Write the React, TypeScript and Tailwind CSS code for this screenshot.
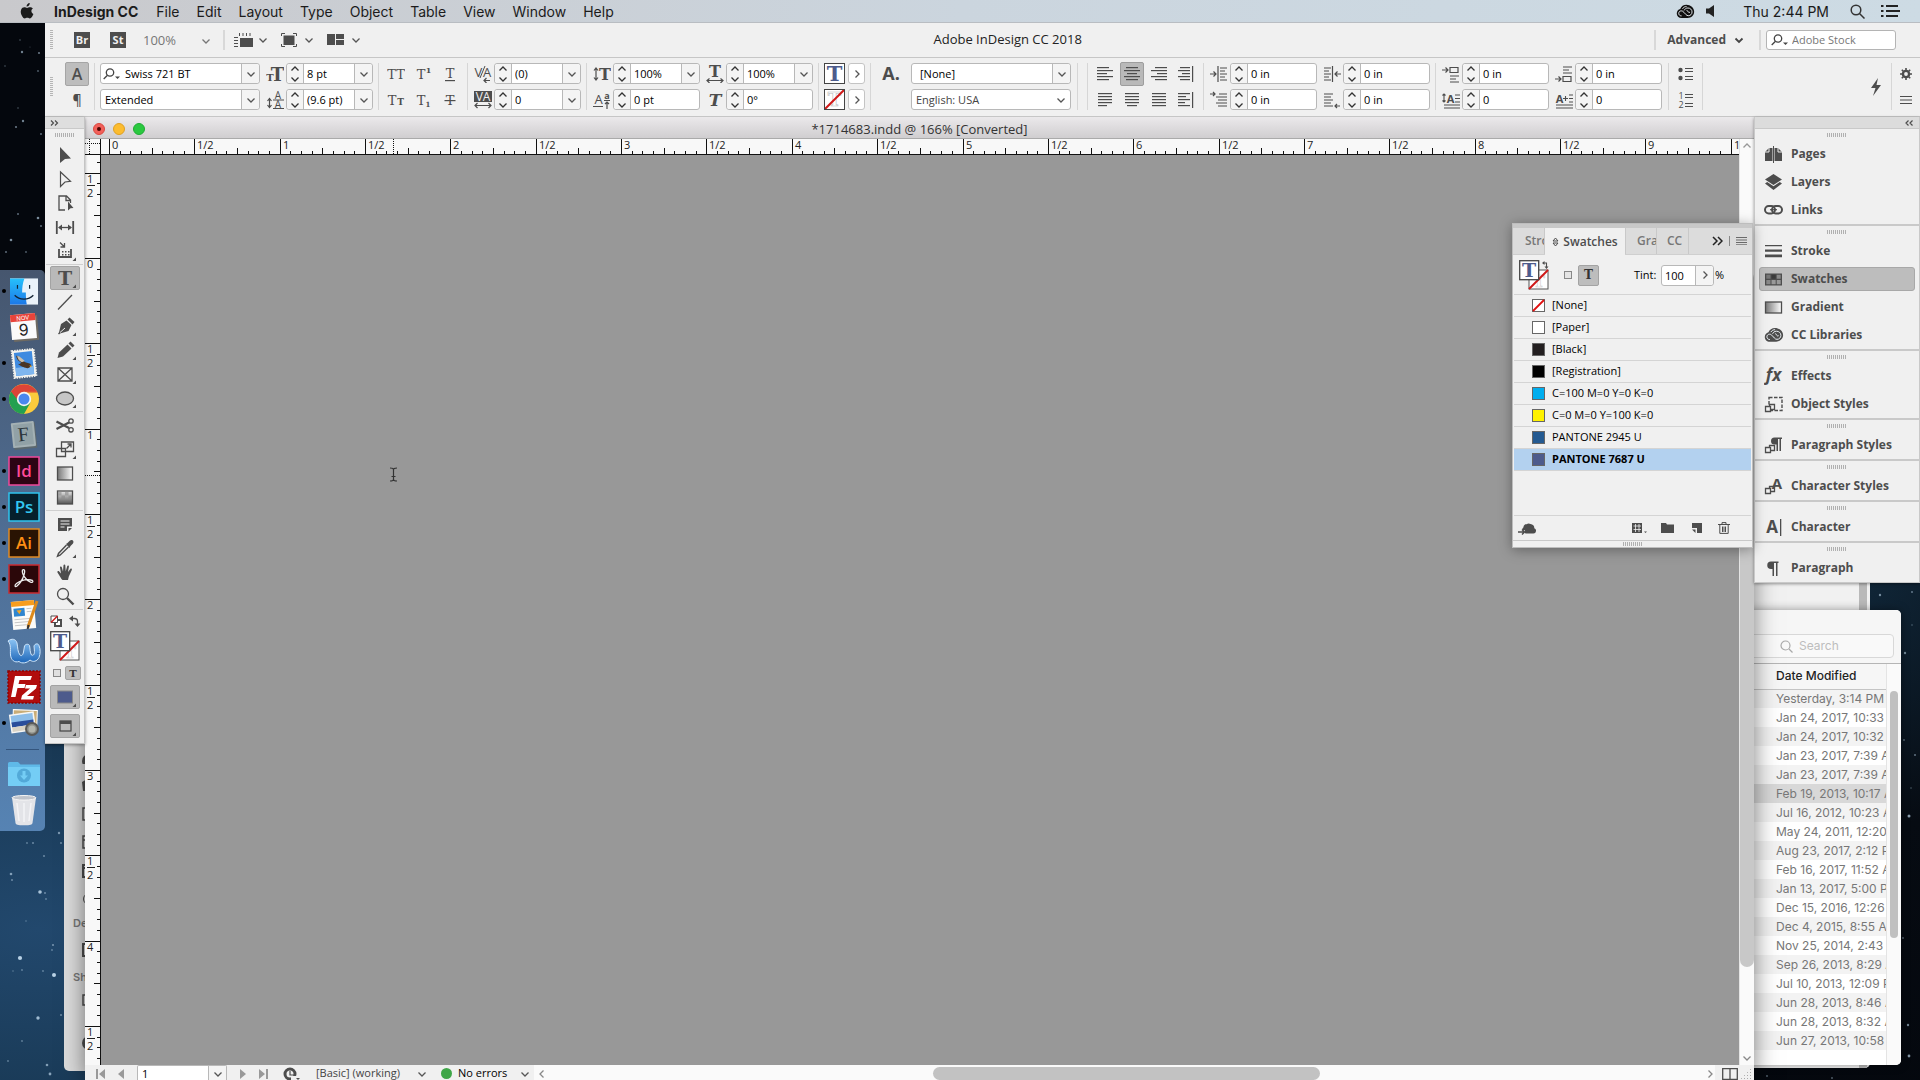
import React from "react";

const G = "#4d4d4d";

type Kids = { children?: React.ReactNode };

function Ico({ children, w = 18, h = 18 }: Kids & { w?: number; h?: number }) {
  return (
    <svg width={w} height={h} viewBox={`0 0 ${w} ${h}`} fill={G} stroke="none" className="block shrink-0" aria-hidden="true">
      {children}
    </svg>
  );
}

function S({ d, w = 1.5, c = G, dash }: { d: string; w?: number; c?: string; dash?: string }) {
  return <path d={d} fill="none" stroke={c} strokeWidth={w} strokeDasharray={dash} />;
}

function Slab({ x, y, s, children, bold = true, italic = false, fill = G }: { x: number; y: number; s: number; children: string; bold?: boolean; italic?: boolean; fill?: string }) {
  return (
    <text x={x} y={y} fontSize={s} fill={fill} textAnchor="middle" fontFamily="'DejaVu Serif', serif" fontWeight={bold ? 700 : 400} fontStyle={italic ? "italic" : "normal"}>
      {children}
    </text>
  );
}

function Sans({ x, y, s, children, bold = false, fill = G }: { x: number; y: number; s: number; children: string; bold?: boolean; fill?: string }) {
  return (
    <text x={x} y={y} fontSize={s} fill={fill} textAnchor="middle" fontFamily="'Open Sans', sans-serif" fontWeight={bold ? 700 : 400}>
      {children}
    </text>
  );
}

function Chevron({ dir = "down", c = "#555", w = 1.3 }: { dir?: "down" | "up" | "left" | "right"; c?: string; w?: number }) {
  const d = { down: "M1.5 3.5L5 7L8.5 3.5", up: "M1.5 6.5L5 3L8.5 6.5", left: "M6.5 1.5L3 5L6.5 8.5", right: "M3.5 1.5L7 5L3.5 8.5" }[dir];
  return (
    <svg width="10" height="10" viewBox="0 0 10 10" className="block shrink-0" aria-hidden="true">
      <path d={d} fill="none" stroke={c} strokeWidth={w} />
    </svg>
  );
}

/* ---------- menu bar ---------- */

const menus = ["File", "Edit", "Layout", "Type", "Object", "Table", "View", "Window", "Help"];

function CloudLogo({ s = 18, c = "#111" }: { s?: number; c?: string }) {
  return (
    <svg width={s} height={(s * 14) / 18} viewBox="0 0 18 14" fill="none" className="block shrink-0" aria-hidden="true">
      <path d="M5.2 13.2C2.6 13.2.7 11.3.7 8.9c0-2 1.4-3.7 3.3-4.2C4.9 2.3 7.200 .8 9.900 .8c3.900 0 7.300 2.800 7.300 6.500 0 3.400-2.800 5.900-6.200 5.900z" fill={c} />
      <path d="M5.300 11.300C3.600 11.300 2.600 10.200 2.600 8.900 2.600 7.500 3.600 6.500 5 6.500c1.100 0 1.700.5 2.500 1.400l1.800 2c.7.8 1.400 1.200 2.400 1.200 2 0 3.500-1.500 3.500-3.600S13.500 3.800 11.300 3.800 8.300 5 7.700 6.100M6.200 4.600C7 3 8.600 2.400 10 2.400M10 6.100c2 0 1.200 3 3.200 1.700" stroke="#e9eef2" strokeWidth=".9" />
    </svg>
  );
}

function MenuBar() {
  return (
    <header className="relative z-30 flex h-[23px] shrink-0 items-center border-b border-[#b9bdc2] bg-linear-to-r from-[#c9c9cc] via-[#cbd5de] to-[#cddbe4] pl-[20px] pr-[20px] font-['Inter',sans-serif] text-[14px] text-[#1b1b1b]">
      <svg width="14" height="16" viewBox="0 0 14 16" fill="#1b1b1b" className="shrink-0" aria-label="Apple">
        <path d="M9.700 0c.1 1-.3 1.900-.8 2.500-.6.700-1.400 1.200-2.300 1.100-.1-.9.3-1.800.8-2.400C8 .5 8.900.1 9.700 0zM12.900 5.500c-.9.600-1.500 1.400-1.500 2.600 0 1.400.8 2.400 2 2.900-.3.900-.7 1.700-1.200 2.500-.7 1-1.400 1.900-2.400 1.900s-1.300-.6-2.500-.6-1.600.6-2.500.6c-1 0-1.800-1-2.500-2C.9 11.500.2 8.700 1.200 6.500 1.800 5.100 3 4.200 4.300 4.200c1.100 0 1.900.7 2.800.7.800 0 1.500-.7 2.900-.7 1.100 0 2.200.5 2.900 1.300z" />
      </svg>
      <nav className="ml-[20px] flex items-center gap-[17px]">
        <button className="mr-px font-bold">InDesign CC</button>
        {menus.map((m) => (
          <button key={m}>{m}</button>
        ))}
      </nav>
      <div className="ml-auto flex items-center">
        <CloudLogo s={19} />
        <svg width="9" height="12" viewBox="0 0 9 12" fill="#222" className="ml-[11px]" aria-label="Volume">
          <path d="M0 3.500h3L8 0v12L3 8.500H0z" />
        </svg>
        <span className="ml-7 mr-[21px]">Thu 2:44 PM</span>
        <svg width="15" height="15" viewBox="0 0 15 15" fill="none" stroke="#333" strokeWidth="1.500" aria-label="Search">
          <circle cx="6" cy="6" r="4.800" />
          <path d="M9.500 9.500L14.500 14.500" />
        </svg>
        <svg width="19" height="12" viewBox="0 0 19 12" fill="#222" className="ml-[16px]" aria-label="Notifications">
          <path d="M0 0h2.500v2H0zM5 0h12v2H5zM0 5h2.500v2H0zM5 5h14v2H5zM0 10h2.500v2H0zM5 10h12v2H5z" />
        </svg>
      </div>
    </header>
  );
}

/* ---------- application bar ---------- */

function GripV() {
  return <div className="h-[20px] w-[3px] shrink-0 bg-[repeating-linear-gradient(to_bottom,#b5b5b5_0_1px,transparent_1px_2px)]" />;
}

function GripH() {
  return <div className="h-[4px] w-[20px] shrink-0 bg-[repeating-linear-gradient(to_right,#b0b0b0_0_1px,transparent_1px_2px)]" />;
}

function Loupe({ c = "#444" }: { c?: string }) {
  return (
    <svg width="18" height="12" viewBox="0 0 18 12" fill="none" stroke={c} strokeWidth="1.300" className="shrink-0" aria-hidden="true">
      <circle cx="7" cy="4.500" r="3.700" />
      <path d="M4.500 7.200L.7 11" />
      <path d="M12 8.500h5l-2.500 2.500z" fill={c} stroke="none" />
    </svg>
  );
}

function AppBar() {
  return (
    <div className="flex h-[35px] shrink-0 items-center border-b border-[#c6c6c6] bg-[#f0f0f0] pl-[5px]">
      <GripV />
      <button className="ml-[21px] h-4 w-4 bg-[#4d4d4d] text-center text-[11px] leading-4 font-bold text-[#f0f0f0]">Br</button>
      <button className="ml-5 h-4 w-4 bg-[#4d4d4d] text-center text-[11px] leading-4 font-bold text-[#f0f0f0]">St</button>
      <label className="ml-[17px] flex items-center pt-[2px]">
        <input aria-label="Zoom level" defaultValue="100%" className="w-[58px] bg-transparent text-[13px] text-[#777] outline-none" />
        <Chevron c="#777" />
      </label>
      <div className="ml-[12px] h-5 w-[2px] bg-[#d8d8d8]" />
      <button aria-label="View options" className="ml-[9px] flex items-center gap-[5px]">
        <Ico w={19} h={16}>
          <path d="M6 6h13v9H6z" />
          <S d="M5 2.500H19" w={3} dash="1 2.500" />
          <S d="M2 5V15" w={4} dash="1 2" />
        </Ico>
        <Chevron />
      </button>
      <button aria-label="Screen mode" className="ml-[13px] flex items-center gap-[7px]">
        <Ico w={16} h={16}>
          <path d="M2.500 3.500h11v9.500h-11z" />
          <S d="M.5 4V1.500H4M12 1.500h3.500V4M.5 12v2.500H4M12 14.500h3.500V12" w={1} />
        </Ico>
        <Chevron />
      </button>
      <button aria-label="Arrange documents" className="ml-[13px] flex items-center gap-[7px]">
        <Ico w={17} h={16}>
          <path d="M0 2h8v11H0zM9 2h8v5H9zM9 8h8v5H9z" />
        </Ico>
        <Chevron />
      </button>
      <h1 className="flex-1 text-center text-[13px] text-[#222]">Adobe InDesign CC 2018</h1>
      <div className="h-5 w-[2px] bg-[#d8d8d8]" />
      <button className="ml-[11px] flex items-center gap-2 text-[12px] font-bold text-[#4d4d4d]">
        Advanced
        <Chevron w={1.800} c="#444" />
      </button>
      <div className="ml-[15px] h-5 w-[2px] bg-[#d8d8d8]" />
      <label className="mr-6 ml-[5px] flex h-[20px] w-[130px] items-center rounded-[3px] border border-[#b4b4b4] bg-white pl-1">
        <Loupe />
        <input type="search" aria-label="Adobe Stock" placeholder="Adobe Stock" className="ml-[3px] w-full min-w-0 text-[11px] text-[#555] outline-none placeholder:text-[#777]" />
      </label>
    </div>
  );
}

/* ---------- control bar ---------- */

function Group({ children, className = "" }: Kids & { className?: string }) {
  return <div className={`flex h-[47px] shrink-0 border-l border-[#d6d6d6] ${className}`}>{children}</div>;
}

function Rows({ children, className = "" }: Kids & { className?: string }) {
  return <div className={`flex flex-col gap-[5px] ${className}`}>{children}</div>;
}

function Cell({ children, className = "w-[22px]" }: Kids & { className?: string }) {
  return <div className={`flex h-[21px] shrink-0 items-center justify-center ${className}`}>{children}</div>;
}

function Stepper({ label, value, arrow = false }: { label: string; value: string; arrow?: boolean }) {
  return (
    <div className="flex h-[21px] w-[87px] rounded-[3px] border border-[#b8b8b8] bg-white">
      <button aria-label={`Step ${label}`} className="flex w-4 shrink-0 flex-col items-center justify-between rounded-l-[3px] bg-[#f4f4f4]">
        <Chevron dir="up" c="#333" />
        <Chevron c="#333" />
      </button>
      <input aria-label={label} defaultValue={value} className="w-full min-w-0 border-l border-[#b8b8b8] pl-[3px] text-[11px] leading-[19px] text-black outline-none" />
      {arrow && (
        <button aria-label={`${label} presets`} className="flex w-[18px] shrink-0 items-center justify-center rounded-r-[3px] border-l border-[#b8b8b8] bg-[#f4f4f4]">
          <Chevron />
        </button>
      )}
    </div>
  );
}

function Combo({ label, value, search = false, pad = "pl-1" }: { label: string; value: string; search?: boolean; pad?: string }) {
  return (
    <div className="flex h-[21px] w-[160px] items-center rounded-[3px] border border-[#b8b8b8] bg-white">
      {search && (
        <span className="pl-[2px]">
          <Loupe />
        </span>
      )}
      <input aria-label={label} defaultValue={value} className={`w-full min-w-0 text-[11px] leading-[19px] text-black outline-none ${pad}`} />
      <button aria-label={`${label} list`} className="flex h-full w-[18px] shrink-0 items-center justify-center rounded-r-[3px] border-l border-[#b8b8b8] bg-[#f4f4f4]">
        <Chevron />
      </button>
    </div>
  );
}

function Align({ rows, bar = false }: { rows: number[][]; bar?: boolean }) {
  return (
    <Ico w={18} h={18}>
      {rows.map(([a, b], i) => (
        <path key={i} d={`M${a} ${2 + i * 3}H${b}v1.200H${a}z`} />
      ))}
      {bar && <path d="M15 1h1.200v16H15z" />}
    </Ico>
  );
}

const alignsTop = [
  { n: "Align left", r: [[1, 13], [1, 17], [1, 11], [1, 17], [1, 13]] },
  { n: "Align center", r: [[3, 15], [1, 17], [4, 14], [1, 17], [3, 15]], on: true },
  { n: "Align right", r: [[5, 17], [1, 17], [7, 17], [1, 17], [5, 17]] },
  { n: "Align towards spine", r: [[3, 13], [1, 13], [5, 13], [1, 13], [3, 13]], bar: true },
];
const alignsBottom = [
  { n: "Justify last left", r: [[2, 16], [2, 16], [2, 16], [2, 16], [2, 11]] },
  { n: "Justify last center", r: [[2, 16], [2, 16], [2, 16], [2, 16], [4, 14]] },
  { n: "Justify all", r: [[2, 16], [2, 16], [2, 16], [2, 16], [2, 16]] },
  { n: "Align away from spine", r: [[1, 13], [1, 9], [1, 13], [1, 8], [1, 13]], bar: true },
];

function AlignRow({ items }: { items: { n: string; r: number[][]; on?: boolean; bar?: boolean }[] }) {
  return (
    <div className="flex">
      {items.map((a) => (
        <Cell key={a.n} className="w-[27px]">
          <button aria-label={a.n} className={a.on ? "flex h-6 w-6 shrink-0 items-center justify-center rounded-[2px] border border-[#9d9d9d] bg-[#b9b9b9]" : "flex h-6 w-6 shrink-0 items-center justify-center"}>
            <Align rows={a.r} bar={a.bar} />
          </button>
        </Cell>
      ))}
    </div>
  );
}

function ControlBar() {
  return (
    <div className="flex h-[59px] shrink-0 items-center border-b border-[#c6c6c6] bg-[#f0f0f0] pb-[1px] pl-[5px]">
      <GripV />
      <Rows className="ml-[11px] w-[30px]">
        <Cell className="w-[26px]">
          <button aria-label="Character formatting" className="flex h-6 w-6 shrink-0 items-center justify-center rounded-[2px] border border-[#a5a5a5] bg-[#bdbdbd] text-[16px] font-semibold text-[#4d4d4d]">A</button>
        </Cell>
        <Cell className="w-[26px]">
          <button aria-label="Paragraph formatting" className="text-[14px] font-semibold text-[#4d4d4d]">¶</button>
        </Cell>
      </Rows>
      <Group className="pr-[5px] pl-[5px]">
        <Rows>
          <Combo label="Font" value="Swiss 721 BT" search />
          <Combo label="Font style" value="Extended" />
        </Rows>
        <Rows className="ml-1">
          <Cell>
            <Ico>
              <Slab x={4} y={16} s={10}>T</Slab>
              <Slab x={11.500} y={16} s={18}>T</Slab>
            </Ico>
          </Cell>
          <Cell>
            <Ico>
              <S d="M3.500 8v8M1.500 10L3.500 7.500L5.500 10M1.500 14L3.500 16.500L5.500 14" w={1.200} />
              <Sans x={12} y={8} s={10}>A</Sans>
              <Sans x={12} y={17} s={10}>A</Sans>
              <path d="M7 8.600h11v1H7zM7 17h11v1H7z" />
            </Ico>
          </Cell>
        </Rows>
        <Rows>
          <Stepper label="Font size" value="8 pt" arrow />
          <Stepper label="Leading" value="(9.6 pt)" arrow />
        </Rows>
      </Group>
      <Group className="pr-[4px] pl-[3px]">
        <Rows>
          <div className="flex">
            <Cell className="w-[27px]"><button aria-label="All caps"><Ico><Slab x={4.500} y={14} s={13} bold={false}>T</Slab><Slab x={13.500} y={14} s={13} bold={false}>T</Slab></Ico></button></Cell>
            <Cell className="w-[27px]"><button aria-label="Superscript"><Ico><Slab x={7} y={14} s={13} bold={false}>T</Slab><Slab x={14.500} y={8} s={8}>1</Slab></Ico></button></Cell>
            <Cell className="w-[27px]"><button aria-label="Underline"><Ico><Slab x={9} y={13} s={13} bold={false}>T</Slab><path d="M4 15h10v1.200H4z" /></Ico></button></Cell>
          </div>
          <div className="flex">
            <Cell className="w-[27px]"><button aria-label="Small caps"><Ico><Slab x={5} y={14} s={13} bold={false}>T</Slab><Slab x={13.500} y={14} s={9}>T</Slab></Ico></button></Cell>
            <Cell className="w-[27px]"><button aria-label="Subscript"><Ico><Slab x={7} y={14} s={13} bold={false}>T</Slab><Slab x={14} y={16} s={7}>1</Slab></Ico></button></Cell>
            <Cell className="w-[27px]"><button aria-label="Strikethrough"><Ico><Slab x={9} y={14} s={13} bold={false}>T</Slab><path d="M3.500 9h11v1.200h-11z" /></Ico></button></Cell>
          </div>
        </Rows>
      </Group>
      <Group className="pr-[5px] pl-[4px]">
        <Rows>
          <Cell><Ico><Sans x={4.500} y={12} s={13}>V</Sans><Sans x={13} y={12} s={13}>A</Sans><S d="M6 13L11 1" w={1} /><S d="M10 15.500h6M12.500 13L10 15.500L12.500 18" w={1.200} /></Ico></Cell>
          <Cell><Ico><path d="M0 0h18v11H0z" /><Sans x={9} y={10} s={12} fill="#f0f0f0">VA</Sans><S d="M1 14.500h16M3.500 12L1 14.500L3.500 17M14.500 12L17 14.500L14.500 17" w={1.200} /></Ico></Cell>
        </Rows>
        <Rows>
          <Stepper label="Kerning" value="(0)" arrow />
          <Stepper label="Tracking" value="0" arrow />
        </Rows>
      </Group>
      <Group className="pr-[5px] pl-[4px]">
        <Rows>
          <Cell><Ico><S d="M3 3v12M1 5.500L3 3L5 5.500M1 12.500L3 15L5 12.500" w={1.200} /><Slab x={12} y={15} s={16}>T</Slab></Ico></Cell>
          <Cell><Ico><Sans x={5.500} y={13} s={13}>A</Sans><Sans x={14} y={8} s={9} bold>a</Sans><S d="M0 15.500h10M11 9.500h6M14 18v-7M12 13L14 11L16 13" w={1.200} /></Ico></Cell>
        </Rows>
        <Rows>
          <Stepper label="Vertical scale" value="100%" arrow />
          <Stepper label="Baseline shift" value="0 pt" />
        </Rows>
        <Rows className="ml-1">
          <Cell><Ico><Slab x={9} y={12} s={16}>T</Slab><S d="M1 15.500h16M3.500 13.500L1 15.500L3.500 18M14.500 13.500L17 15.500L14.500 18" w={1.200} /></Ico></Cell>
          <Cell><Ico><Slab x={9} y={15} s={17} italic>T</Slab></Ico></Cell>
        </Rows>
        <Rows>
          <Stepper label="Horizontal scale" value="100%" arrow />
          <Stepper label="Skew" value="0°" />
        </Rows>
      </Group>
      <Group className="gap-[3px] px-[5px]">
        <Rows>
          <button aria-label="Fill" className="h-[21px] w-[21px] border border-[#444] bg-white"><Ico w={19} h={19}><Slab x={9.500} y={17} s={21} fill="#4d5b8c">T</Slab></Ico></button>
          <button aria-label="Stroke" className="h-[21px] w-[21px] border border-[#444] bg-white"><Ico w={19} h={19}><text x="9.500" y="16" fontSize="18" textAnchor="middle" fontFamily="'DejaVu Serif', serif" fontWeight="700" fill="#fff" stroke="#bbb" strokeWidth=".6">T</text><S d="M0 19L19 0" w={2} c="#d01818" /></Ico></button>
        </Rows>
        <Rows>
          <button aria-label="Fill options" className="flex h-[21px] w-[17px] items-center justify-center rounded-[3px] border border-[#c4c4c4] bg-white"><Chevron dir="right" /></button>
          <button aria-label="Stroke options" className="flex h-[21px] w-[17px] items-center justify-center rounded-[3px] border border-[#c4c4c4] bg-white"><Chevron dir="right" /></button>
        </Rows>
      </Group>
      <Group className="pr-[6px]">
        <Cell className="w-10"><span className="text-[18px] font-bold text-[#4d4d4d]">A.</span></Cell>
        <Rows>
          <Combo label="Character style" value="[None]" pad="pl-2" />
          <div className="grid h-[21px] w-[160px] items-center rounded-[3px] border border-[#b8b8b8] bg-white">
            <select aria-label="Language" className="col-start-1 row-start-1 w-full appearance-none pl-1 text-[11px] leading-[19px] text-[#444] outline-none">
              <option>English: USA</option>
            </select>
            <span className="pointer-events-none col-start-1 row-start-1 mr-1 justify-self-end"><Chevron /></span>
          </div>
        </Rows>
      </Group>
      <Group className="w-[10px]" />
      <Group className="pr-[4px] pl-[3px]">
        <Rows>
          <AlignRow items={alignsTop} />
          <AlignRow items={alignsBottom} />
        </Rows>
      </Group>
      <Group className="pr-[5px] pl-[4px]">
        <Rows>
          <Cell><Ico><S d="M0 9h6M3.500 6.500L6 9L3.500 11.500M8 1v16M10 3h7M10 6h5M10 9h7M10 12h5M10 15h7" w={1.200} /></Ico></Cell>
          <Cell><Ico><S d="M0 3h5M3 1L5 3L3 5M9 3h8M6 6h11M8 9h9M6 12h11M8 15h9" w={1.200} /></Ico></Cell>
        </Rows>
        <Rows>
          <Stepper label="Left indent" value="0 in" />
          <Stepper label="First line left indent" value="0 in" />
        </Rows>
        <Rows className="ml-1">
          <Cell><Ico><S d="M18 9h-6M14.500 6.500L12 9L14.500 11.500M9.500 1v16M1 3h7M1 6h5M1 9h7M1 12h5M1 15h7" w={1.200} /></Ico></Cell>
          <Cell><Ico><S d="M1 3h9M1 6h7M1 9h9M1 12h7M1 15h9M17 15h-5M14 13L12 15L14 17" w={1.200} /></Ico></Cell>
        </Rows>
        <Rows>
          <Stepper label="Right indent" value="0 in" />
          <Stepper label="Last line right indent" value="0 in" />
        </Rows>
      </Group>
      <Group className="pr-[6px] pl-[4px]">
        <Rows>
          <Cell><Ico><S d="M0 5h6M3.500 2.500L6 5L3.500 7.500M8 2.500h8v5H8zM8 11h9M8 14h6M8 17h9" w={1.200} /></Ico></Cell>
          <Cell><Ico><S d="M2 3v8M.5 4.500L2 3L3.500 4.500M.5 9.500L2 11L3.500 9.500M13 4h5M13 7.500h5M13 11h5M2 14h16M2 17h16" w={1.100} /><Sans x={8.500} y={11.500} s={11} bold>A</Sans></Ico></Cell>
        </Rows>
        <Rows>
          <Stepper label="Space before" value="0 in" />
          <Stepper label="Drop cap lines" value="0" />
        </Rows>
        <Rows className="ml-1">
          <Cell><Ico><S d="M8 2h9M8 5h6M8 8h9M0 14h6M3.500 11.500L6 14L3.500 16.500M8 11.500h8v5H8z" w={1.200} /></Ico></Cell>
          <Cell><Ico><S d="M8 7.500h5M10.500 5v5M14 4h4M14 7.500h4M14 11h4M1 14h17M1 17h17" w={1.100} /><Sans x={4.500} y={11.500} s={11} bold>A</Sans></Ico></Cell>
        </Rows>
        <Rows>
          <Stepper label="Space after" value="0 in" />
          <Stepper label="Drop cap characters" value="0" />
        </Rows>
      </Group>
      <Group className="w-[34px] justify-center">
        <Rows>
          <Cell><button aria-label="Bulleted list"><Ico><circle cx="3.500" cy="5" r="2.200" /><circle cx="3.500" cy="13" r="2.200" /><S d="M8 3.500h8M8 6.500h8M8 11.500h8M8 14.500h8" w={1.200} /></Ico></button></Cell>
          <Cell><button aria-label="Numbered list"><Ico><Sans x={4} y={8} s={9}>1</Sans><Sans x={4} y={17} s={9}>2</Sans><S d="M8 3.500h8M8 6.500h8M8 12.500h8M8 15.500h8" w={1.200} /></Ico></button></Cell>
        </Rows>
      </Group>
      <Group className="flex-1 items-center justify-end pr-[9px]">
        <button aria-label="Quick apply"><Ico w={12} h={18}><path d="M8 0L1 10h4.500L3 18L11 7H6.500z" /></Ico></button>
      </Group>
      <Group className="w-[29px] justify-center">
        <Rows>
          <Cell>
            <button aria-label="Customize control panel">
              <Ico w={12} h={12}><circle cx="6" cy="6" r="3.200" fill="none" stroke={G} strokeWidth="2.200" /><S d="M6 0v12M0 6h12M1.800 1.800l8.400 8.400M10.200 1.800l-8.400 8.400" w={1.600} /><circle cx="6" cy="6" r="1.900" fill="#f0f0f0" /></Ico>
            </button>
          </Cell>
          <Cell>
            <button aria-label="Control panel menu"><Ico w={12} h={10}><S d="M0 1.500h12M0 5h12M0 8.500h12" w={1.200} /></Ico></button>
          </Cell>
        </Rows>
      </Group>
    </div>
  );
}

/* ---------- Mac dock ---------- */

function Tile({ bg, edge, fg, t }: { bg: string; edge: string; fg: string; t: string }) {
  return (
    <svg width="32" height="30" viewBox="0 0 32 30" aria-label={t}>
      <rect x="1" y="1" width="30" height="28" fill={bg} stroke={edge} strokeWidth="1.500" />
      <text x="16" y="20.500" fontSize="17" textAnchor="middle" fill={fg} fontFamily="'Open Sans', sans-serif" fontWeight="600">{t}</text>
    </svg>
  );
}

const dockItems: { n: string; run?: boolean; el: React.ReactNode }[] = [
  { n: "Finder", run: true, el: (
    <svg width="28" height="27" viewBox="0 0 30 28"><defs><linearGradient id="fa" x1="0" x2="0" y1="0" y2="1"><stop offset="0" stopColor="#26c0fb" /><stop offset="1" stopColor="#1c78e8" /></linearGradient></defs><rect width="30" height="28" fill="#e9f2fa" /><path d="M0 0h15.500c-2 5-2.500 10-2.500 15h4c0 5 .2 9 1 13H0z" fill="url(#fa)" /><path d="M8 7v4M21 7v4" stroke="#123" strokeWidth="1.300" /><path d="M5 18c5 5.500 15 5.500 20 0" stroke="#123" strokeWidth="1.300" fill="none" /></svg>) },
  { n: "Calendar", el: (
    <svg width="30" height="30" viewBox="0 0 30 30"><g transform="rotate(-5 15 15)"><rect x="4" y="4" width="25" height="25" fill="#6e6a62" /><rect x="2" y="2" width="25" height="25" fill="#fafafa" /><rect x="2" y="2" width="25" height="7" fill="#e8443a" /><text x="14.500" y="8" fontSize="6" fill="#fff" textAnchor="middle" fontFamily="Inter, sans-serif">NOV</text><text x="14.500" y="23.500" fontSize="16" fill="#222" textAnchor="middle" fontFamily="Inter, sans-serif">9</text></g></svg>) },
  { n: "Mail", run: true, el: (
    <svg width="28" height="32" viewBox="0 0 28 32"><g transform="rotate(-6 14 16)"><rect x="3" y="3" width="22" height="27" fill="#f2f2ee" /><rect x="3" y="3" width="22" height="27" fill="none" stroke="#f2f2ee" strokeWidth="2" strokeDasharray="1.500 1" /><rect x="5" y="5" width="18" height="23" fill="#3f8be0" /><path d="M5 20h18v8H5z" fill="#7fb6ee" /><path d="M7 8c3 0 5 5 8 7s5 1 6 4c-2 3-4 3-6 2-3-2-5-2-7-5 2 1 3 0 3-1C8 13 7 11 7 8z" fill="#4a3524" /><path d="M8 8c3 1 5 4 7 6l-3 1C9 13 8 11 8 8z" fill="#c9bfae" /><path d="M19 19l3 .5-2 1.500z" fill="#e6a52e" /></g></svg>) },
  { n: "Chrome", run: true, el: (
    <svg width="32" height="32" viewBox="0 0 32 32"><circle cx="16" cy="16" r="15" fill="#fbcb3c" /><path d="M16 16L3 8.500A15 15 0 0 0 16 31l6.500-11.500z" fill="#24a050" /><path d="M16 16H9L3 8.500A15 15 0 0 1 29 8.800H16z" fill="#dc4437" /><path d="M16 9H29.200" stroke="#dc4437" strokeWidth="1" /><circle cx="16" cy="16" r="7.200" fill="#f4f4f4" /><circle cx="16" cy="16" r="5.500" fill="#4a87ee" /></svg>) },
  { n: "Font Book", el: (
    <svg width="28" height="32" viewBox="0 0 28 32"><g transform="rotate(-6 14 16)"><rect x="3" y="4" width="23" height="26" rx="1" fill="#5c686e" /><rect x="2" y="3" width="23" height="25" rx="1" fill="#a4b1b4" /><rect x="4" y="5" width="19" height="21" fill="#91a1a6" /><text x="13.500" y="22" fontSize="20" fill="#2b343a" textAnchor="middle" fontFamily="'Liberation Serif', serif">F</text></g></svg>) },
  { n: "InDesign", run: true, el: <Tile bg="#2d0414" edge="#f0489a" fg="#ff4a98" t="Id" /> },
  { n: "Photoshop", run: true, el: <Tile bg="#06202c" edge="#2fc3ee" fg="#33c8f2" t="Ps" /> },
  { n: "Illustrator", run: true, el: <Tile bg="#291303" edge="#e08a24" fg="#ff8f14" t="Ai" /> },
  { n: "Acrobat", run: true, el: (
    <svg width="32" height="30" viewBox="0 0 32 30"><rect x="1" y="1" width="30" height="28" fill="#2b0709" stroke="#c92b30" strokeWidth="1.500" /><path d="M14.500 6c2-1.500 3 1 1.500 5-1.500 4.500-4.500 9-7 11-2 1.500-3-.5-.5-2.500C12 17 18 15 23 16c3 .5 2 3-.5 2.200C18 16.500 13.500 10 14.500 6z" fill="none" stroke="#eee" strokeWidth="1.300" /></svg>) },
  { n: "Pages", el: (
    <svg width="30" height="32" viewBox="0 0 30 32"><g transform="rotate(-5 14 16)"><rect x="3" y="2" width="23" height="28" fill="#fbfbf8" /><rect x="3" y="2" width="23" height="5" fill="#f79d1e" /><rect x="5" y="9" width="11" height="8" fill="#2f86cf" /><path d="M8 11h5l-2.500 4z" fill="#f5a623" /><path d="M18 10h5M18 13h5M5 20h17M5 23h17M5 26h12" stroke="#bbb" strokeWidth=".8" /></g><path d="M28 2L19 28" stroke="#dc8a1c" strokeWidth="3" /><path d="M19.600 26l-1 4" stroke="#333" strokeWidth="2" /></svg>) },
  { n: "Word", el: (
    <svg width="34" height="26" viewBox="0 0 34 26"><defs><linearGradient id="wd" x1="0" x2="0" y1="0" y2="1"><stop stopColor="#8cc4f4" /><stop offset="1" stopColor="#1d66b8" /></linearGradient></defs><path d="M1 3c4-3 8-2 9 2 .8 4 .5 9 3 12 1.500 1.500 3 0 3.500-3L17.500 8c.8-2 4-2.500 5-.5.8 3 .2 7 2 9.500 2 1 3-1 3-3.500l-.5-5.500C28 5.500 31 5 32 7.500c1.500 4 1.500 8 0 12-2 4-6 5-9 2.500-3 3-8 4-11 1.500C7.500 25 4 22 3.500 17 3 12 4.500 7 1 3z" fill="url(#wd)" stroke="#cfe6fb" strokeWidth="1" /></svg>) },
  { n: "FileZilla", el: (
    <svg width="34" height="34" viewBox="0 0 34 34"><rect x="1" y="1" width="32" height="32" fill="#b10d0d" stroke="#8b0505" strokeWidth="1.500" strokeDasharray="2 1.500" /><path d="M8 6h17l-1.500 4H12.500L11.500 14h7l-1 4h-7L8.500 27H4zM19 15h11l-1 3.500L20 26h7l-1 3.500H14l1-4L23 18.500h-5z" fill="#fff" /></svg>) },
  { n: "Preview", run: true, el: (
    <svg width="32" height="30" viewBox="0 0 32 30"><rect x="5" y="2" width="24" height="18" fill="#c9ad77" stroke="#fff" transform="rotate(2 16 12)" /><g transform="rotate(-8 14 14)"><rect x="2" y="5" width="25" height="19" fill="#f7f7f5" /><rect x="3.500" y="6.500" width="22" height="8" fill="#8cbde8" /><rect x="3.500" y="13" width="22" height="5" fill="#2a4d9a" /><rect x="3.500" y="18" width="22" height="4.500" fill="#d9d3c5" /></g><circle cx="24" cy="21" r="6" fill="#8d8f8a" stroke="#5a5a58" strokeWidth="2" /><circle cx="24" cy="21" r="3.500" fill="#b4b6ae" /></svg>) },
];

function MacDock() {
  return (
    <aside aria-label="Dock" className="flex w-[45px] shrink-0 flex-col justify-center pb-px">
      <div className="flex flex-col rounded-r-[5px] bg-linear-to-b from-[#46566e] via-[#4f6f96] to-[#5683b3] pt-[3px] pb-[3px]">
        {dockItems.map((d) => (
          <button key={d.n} aria-label={d.n} className="flex h-9 items-center pr-1">
            <span className={d.run ? "ml-[2px] h-1 w-1 shrink-0 rounded-full bg-black" : "ml-[2px] h-1 w-1 shrink-0"} />
            <span className="flex flex-1 justify-center">{d.el}</span>
          </button>
        ))}
        <div className="mx-[6px] mt-[8px] mb-[6px] h-px bg-[#34557d]" />
        <button aria-label="Downloads" className="flex h-9 items-center justify-center pl-[3px]">
          <svg width="32" height="26" viewBox="0 0 32 26"><path d="M0 2.500A1.500 1.500 0 0 1 1.500 1H10l2.500 2.500H32V25H0z" fill="#5fb9e8" /><path d="M0 6h32v19H0z" fill="#74cdf5" /><circle cx="16" cy="14.500" r="7" fill="#52a9d8" /><path d="M14.500 10h3v4.500h2.500L16 19l-4-4.500h2.500z" fill="#74cdf5" /></svg>
        </button>
        <button aria-label="Trash" className="flex h-9 items-center justify-center pl-[3px]">
          <svg width="26" height="31" viewBox="0 0 26 31"><path d="M1 2.500L4.500 28c.3 1.500 2 2.300 8.500 2.300s8.200-.8 8.500-2.300L25 2.500z" fill="#e3e4e8" /><ellipse cx="13" cy="2.800" rx="12" ry="2.300" fill="#bfc4cc" stroke="#f5f5f5" /><path d="M6 8l2 18M13 8v19M20 8l-2 18" stroke="#f3f3f6" strokeWidth="1.500" /></svg>
        </button>
      </div>
    </aside>
  );
}

/* ---------- tool strip ---------- */

const corner = <path d="M21 20h-3.500L21 16.500z" />;

const tools: { n: string; el: React.ReactNode; sep?: boolean; on?: boolean }[] = [
  { n: "Selection", el: <path d="M5 2v16l5-4 6-.5z" /> },
  { n: "Direct Selection", el: <S d="M5.500 3v14.500l4.500-4.500 5.500-.7z" w={1.200} /> },
  { n: "Page", el: <><S d="M10 17H4V3h7.500l4 4v3M11 3v4.500h4.500" w={1.300} /><path d="M13 8.500v9l2.500-2.200 3-.3z" /></> },
  { n: "Gap", el: <><S d="M1.800 4v13M18.200 4v13" w={1.800} /><S d="M4 10.500h12" w={1.300} /><path d="M3 10.500l4-3v6zM17 10.500l-4-3v6z" /></> },
  { n: "Content Collector", sep: true, el: <><S d="M4 8v8h12V8" w={1.800} /><path d="M7 10h1.500v1.500H7zM10 10h1.500v1.500H10zM13 10h1.500v1.500H13zM7 13h1.500v1.500H7zM10 13h1.500v1.500H10zM13 13h1.500v1.500H13z" /><S d="M5 1.500l4 4M9.500 2v4H5.500" w={1.300} />{corner}</> },
  { n: "Type", on: true, el: <><Slab x={10} y={16.500} s={19}>T</Slab>{corner}</> },
  { n: "Line", el: <S d="M3 17.500L17 3" w={1.300} /> },
  { n: "Pen", el: <><path d="M11.500 4.500l5 4.500-3 6-8.500 2.500-1 1-1-1 1-1L6 8z" /><path d="M12.500 3.500l2-2 5 4.500-2 2.500z" /><S d="M5 16.500l5-4.500" w={1} c="#f0f0f0" />{corner}</> },
  { n: "Pencil", el: <><path d="M2.500 18l1.500-5.500 8.500-8 4 4-8.500 8z" /><path d="M13.500 3.500l2-2 4 4-2 2z" />{corner}</> },
  { n: "Rectangle Frame", el: <><S d="M3 4h14v13H3zM3 4l14 13M17 4L3 17" w={1.300} />{corner}</> },
  { n: "Ellipse", sep: true, el: <><ellipse cx="10" cy="10.500" rx="8.500" ry="6.500" fill="#c6c6c6" stroke={G} strokeWidth="1.300" />{corner}</> },
  { n: "Scissors", el: <><S d="M1.500 6.500L14 13M1.500 14L14 7.500" w={2.200} /><circle cx="16" cy="6" r="2.200" fill="none" stroke={G} strokeWidth="1.300" /><circle cx="16" cy="14.800" r="2.200" fill="none" stroke={G} strokeWidth="1.300" /></> },
  { n: "Free Transform", el: <><S d="M6.500 3h12v9.500h-12zM1.500 9.500h9v8h-9z" w={1.300} /><S d="M11.500 9.500l4-4M12.500 5h3.500v3.500" w={1.300} />{corner}</> },
  { n: "Gradient Swatch", el: <><defs><linearGradient id="gs"><stop stopColor="#777" /><stop offset="1" stopColor="#fff" /></linearGradient></defs><rect x="2.500" y="4" width="15" height="13" fill="url(#gs)" stroke={G} strokeWidth="1.300" /></> },
  { n: "Gradient Feather", sep: true, el: <><defs><linearGradient id="gf" x1="0" x2="0" y1="0" y2="1"><stop stopColor="#e8e8e8" /><stop offset="1" stopColor="#555" /></linearGradient></defs><rect x="2.500" y="4" width="15" height="13" fill="url(#gf)" stroke={G} strokeWidth="1.300" /><path d="M3 4.500h3.500v4H3zM10 4.500h3.500v4H10zM6.500 8.500H10V12H6.500zM13.500 8.500H17V12h-3.500z" fill="#8a8a8a" opacity=".6" /></> },
  { n: "Note", el: <><path d="M3 4h14v8.500h-5V17H3z" /><path d="M13.500 14H17l-3.500 3.500z" /><S d="M5.500 7h9M5.500 10h9M5.500 13h4" w={1.200} c="#f0f0f0" /></> },
  { n: "Eyedropper", el: <><path d="M11 6l1.500-1L15 2.500c2-1.500 4.500.5 3 3L15.500 8l-1 2z" /><S d="M11.500 7L3.500 15.500 2.500 18.200 5 17.200 13.500 9" w={1.400} />{corner}</> },
  { n: "Hand", el: <path d="M6.500 17L2.500 10.500c-.6-1.200.9-2 1.700-1L6 11.500 5 5.500c-.2-1.300 1.500-1.500 1.800-.3L8 9.500 8.500 3.300c.1-1.200 1.700-1.200 1.800 0l.4 6 1.500-5c.3-1.200 1.900-.8 1.700.4L13 10l2.300-3c.8-.9 2-.1 1.500 1l-3 6.500L13 18H7.500z" /> },
  { n: "Zoom", sep: true, el: <><circle cx="8" cy="8" r="5.500" fill="none" stroke={G} strokeWidth="1.300" /><S d="M12 12l6.500 6.500" w={2.400} /></> },
];

function FillStroke({ w = 30 }: { w?: number }) {
  return (
    <svg width={w} height={w} viewBox="0 0 30 30" aria-label="Fill and stroke" className="block">
      <rect x="10" y="10" width="19" height="19" fill="#fff" stroke="#555" />
      <text x="20" y="27" fontSize="16" textAnchor="middle" fontFamily="'DejaVu Serif', serif" fill="#fff" stroke="#ccc" strokeWidth=".6" fontWeight="700">T</text>
      <path d="M10 29L29 10" stroke="#d01818" strokeWidth="2" />
      <rect x=".7" y=".7" width="19" height="19" fill="#fff" stroke="#444" strokeWidth="1.300" />
      <Slab x={10} y={17} s={19} fill="#4d5b8c">T</Slab>
    </svg>
  );
}

function ToolStrip() {
  return (
    <aside aria-label="Tools" className="z-20 flex w-[40px] shrink-0 flex-col self-start border-r border-b border-[#c4c4c4] bg-[#f0f0f0] shadow-[0_1px_3px_rgba(0,0,0,0.4)]">
      <button aria-label="Expand tools" className="flex h-[12px] items-center border-b border-[#c9c9c9] bg-[#dedede] pl-[5px]">
        <Ico w={9} h={6}><S d="M1 .5L3.500 3L1 5.500M5 .5L7.500 3L5 5.500" w={1.200} /></Ico>
      </button>
      <div className="flex h-[14px] items-start justify-center pt-1"><GripH /></div>
      {tools.map((t) => (
        <React.Fragment key={t.n}>
          <button aria-label={t.n} className={t.on ? "mx-auto flex h-6 w-[30px] items-center justify-center rounded-[2px] border border-[#a3a3a3] bg-[#b9b9b9]" : "mx-auto flex h-6 w-[30px] items-center justify-center"}>
            <svg width="24" height="20" viewBox="-2 0 24 20" fill={G} className="block shrink-0">{t.el}</svg>
          </button>
          {t.sep && <div className="m-px h-px bg-[#cfcfcf]" />}
        </React.Fragment>
      ))}
      <div className="mt-[3px] flex h-[14px] items-center justify-between pr-[3px] pl-[5px]">
        <Ico w={12} h={12}><path d="M5 5h6v6H5z" fill="#fff" stroke={G} strokeWidth="2" /><path d="M1 1h6.500v6.500H1z" fill="#fff" stroke={G} strokeWidth="1" /><S d="M1 7.500L7.500 1" c="#d01818" /></Ico>
        <Ico w={12} h={12}><S d="M3 3.500h2.500a3 3 0 0 1 3 3V10" w={1.300} /><path d="M0 3.500L4 .5v6zM8.500 12L5.500 8.500h6z" /></Ico>
      </div>
      <div className="mt-[3px] flex justify-center"><FillStroke /></div>
      <div className="mt-[5px] flex items-center justify-between pr-[3px] pl-[8px]">
        <button aria-label="Formatting affects container" className="h-2 w-2 border border-[#888] bg-[#e0e0e0]" />
        <button aria-label="Formatting affects text" className="flex h-[14px] w-4 items-center justify-center rounded-[2px] border border-[#a3a3a3] bg-[#bdbdbd] font-['DejaVu_Serif',serif] text-[10px] font-bold text-[#333]">T</button>
      </div>
      <button aria-label="Apply color" className="mx-auto mt-[5px] flex h-6 w-[30px] items-center justify-center rounded-[2px] border border-[#a3a3a3] bg-[#b9b9b9]">
        <svg width="24" height="20" viewBox="-2 0 24 20" fill={G}><rect x="2.500" y="4" width="15" height="12" fill="#4d5b8c" stroke="#888" />{corner}</svg>
      </button>
      <button aria-label="Screen mode" className="mx-auto mt-[5px] mb-[5px] flex h-6 w-[30px] items-center justify-center rounded-[2px] border border-[#a3a3a3] bg-[#b9b9b9]">
        <svg width="24" height="20" viewBox="-2 0 24 20" fill={G}><rect x="5" y="5" width="11" height="10" fill="#bbb" stroke="#444" strokeWidth="1.200" /><path d="M5 5h11v3H5z" />{corner}</svg>
      </button>
    </aside>
  );
}

/* ---------- document window ---------- */

const INCH = 170.7;

function RulerH() {
  const ticks = Array.from({ length: 240 }, (_, i) => i);
  return (
    <svg className="block h-4 min-w-0 flex-1 bg-[#f8f8f8]" width="100%" height="16" aria-label="Horizontal ruler" fontFamily="'Open Sans', sans-serif" fontSize="11" fill="#222">
      {ticks.map((i) => {
        const x = Math.round(8 + (i * INCH) / 16);
        const len = i % 8 === 0 ? 15 : i % 4 === 0 ? 6 : 3;
        return <rect key={i} x={x} y={15 - len} width="1" height={len} fill="#111" />;
      })}
      {ticks.filter((i) => i % 8 === 0).map((i) => (
        <text key={i} x={Math.round(8 + (i * INCH) / 16) + 3} y="10">{i % 16 === 0 ? i / 16 : "1/2"}</text>
      ))}
      <path d="M292.500 0v15" stroke="#111" strokeDasharray="1 1" />
      <rect y="15" width="100%" height="1" fill="#111" />
    </svg>
  );
}

function RulerV() {
  const ticks = Array.from({ length: 180 }, (_, i) => i - 9);
  return (
    <svg className="block h-full w-4 shrink-0 bg-[#f8f8f8]" width="16" height="100%" aria-label="Vertical ruler" fontFamily="'Open Sans', sans-serif" fontSize="11" fill="#222">
      {ticks.map((i) => {
        const y = Math.round(103 + (i * INCH) / 16);
        const len = i % 8 === 0 ? 15 : i % 4 === 0 ? 6 : 3;
        return <rect key={i} x={15 - len} y={y} width={len} height="1" fill="#111" />;
      })}
      {ticks.filter((i) => i % 8 === 0).map((i) => {
        const y = Math.round(103 + (i * INCH) / 16);
        return i % 16 === 0 ? (
          <text key={i} x="2" y={y + 10}>{i / 16}</text>
        ) : (
          <g key={i}>
            <text x="2" y={y + 10}>1</text>
            <rect x="2" y={y + 12} width="8" height="1" />
            <text x="2" y={y + 24}>2</text>
          </g>
        );
      })}
      <path d="M0 320.500h15" stroke="#111" strokeDasharray="1 1" />
      <rect x="15" width="1" height="100%" fill="#111" />
    </svg>
  );
}

function Tri({ d, label }: { d: string; label: string }) {
  return (
    <button aria-label={label} className="flex w-5 items-center justify-center">
      <svg width="10" height="10" viewBox="0 0 10 10" fill="#999"><path d={d} /></svg>
    </button>
  );
}

function StatusBar() {
  return (
    <footer className="-mb-[2px] flex h-[17px] shrink-0 items-center bg-[#f0f0f0] text-[11px] text-[#444]">
      <div className="flex items-center pl-[6px]">
        <Tri label="First page" d="M0 0h2v10H0zM9 0v10L3 5z" />
        <Tri label="Previous page" d="M8 0v10L2 5z" />
      </div>
      <div className="ml-[6px] flex h-[17px] w-[90px] rounded-t-[2px] border border-b-0 border-[#b8b8b8] bg-white">
        <input aria-label="Page" defaultValue="1" className="w-full min-w-0 pl-1 leading-[16px] text-black outline-none" />
        <button aria-label="Page list" className="flex w-[18px] shrink-0 items-center justify-center border-l border-[#b8b8b8] bg-[#f4f4f4]"><Chevron /></button>
      </div>
      <div className="ml-[6px] flex items-center">
        <Tri label="Next page" d="M2 0v10l6-5z" />
        <Tri label="Last page" d="M8 0h2v10H8zM1 0v10l6-5z" />
      </div>
      <span className="ml-[10px]"><Ico w={17} h={14}><circle cx="7" cy="7" r="5" fill="none" stroke={G} strokeWidth="3" /><S d="M7 4v4h4" w={1.200} /><path d="M8 9h5v5H8z" fill="#f0f0f0" /><path d="M13 11h4l-2 2z" /></Ico></span>
      <label className="ml-[16px] grid w-[111px] items-center">
        <select aria-label="Preflight profile" className="col-start-1 row-start-1 appearance-none outline-none"><option>[Basic] (working)</option></select>
        <span className="pointer-events-none col-start-1 row-start-1 justify-self-end"><Chevron /></span>
      </label>
      <span className="ml-[14px] h-[11px] w-[11px] rounded-full bg-[#3fa648]" />
      <button className="ml-[6px] flex w-[72px] items-center justify-between text-black">No errors <Chevron /></button>
      <div className="ml-[4px] flex h-full flex-1 items-center bg-[#fafafa]">
        <span className="ml-[3px]"><Chevron dir="left" c="#888" /></span>
        <div className="flex h-[13px] flex-1 px-1">
          <div className="flex-[381]" />
          <div className="flex-[387] rounded-full bg-[#c2c2c2]" />
          <div className="flex-[380]" />
        </div>
        <Chevron dir="right" c="#888" />
      </div>
      <button aria-label="Split layout" className="ml-[7px]"><Ico w={16} h={12}><S d="M.7.700h14.600v10.600H.7zM8 .7v10.600" w={1.300} /></Ico></button>
      <div className="mx-[2px] h-[12px] w-[12px] bg-[radial-gradient(#aaa_0.7px,transparent_1px)] bg-[length:3px_3px] [clip-path:polygon(100%_0,100%_100%,0_100%)]" />
    </footer>
  );
}

function DocumentWindow() {
  return (
    <main className="z-10 flex min-w-0 flex-1 flex-col bg-[#f0f0f0] shadow-[0_0_22px_rgba(0,0,0,0.5)]">
      <div className="flex h-[22px] shrink-0 items-center border-b border-[#aaa] bg-linear-to-b from-[#ebe9eb] to-[#d0ced0] px-2 pt-[2px]">
        <div className="flex w-[60px] gap-2">
          <button aria-label="Close" className="flex h-3 w-3 items-center justify-center rounded-full border border-[#d9483f] bg-[#f2605a]"><span className="h-1 w-1 rounded-full bg-[#4a0502]" /></button>
          <button aria-label="Minimize" className="h-3 w-3 rounded-full border border-[#dfa023] bg-[#fcbc2f]" />
          <button aria-label="Zoom" className="h-3 w-3 rounded-full border border-[#1eab33] bg-[#2ac83f]" />
        </div>
        <h2 className="flex-1 pr-[60px] text-center text-[13px] leading-5 text-[#333]">*1714683.indd @ 166% [Converted]</h2>
      </div>
      <div className="flex min-h-0 flex-1">
        <div className="flex min-w-0 flex-1 flex-col">
          <div className="flex h-4 shrink-0">
            <svg width="16" height="16" className="block shrink-0 bg-[#f8f8f8]"><path d="M0 4.500h15M4.500 0v16" stroke="#111" strokeDasharray="1 1" /><path d="M15.500 0v16M0 15.500h16" stroke="#111" /></svg>
            <RulerH />
          </div>
          <div className="flex min-h-0 flex-1">
            <RulerV />
            <div className="relative flex-1 bg-[#989898]">
              <svg width="9" height="15" viewBox="0 0 9 15" className="absolute top-[312px] left-[288px]" aria-label="Text cursor"><path d="M1 1c2 0 3.500.5 3.500 1.500C4.500 1.500 6 1 8 1M4.500 2.500v10M1 14c2 0 3.500-.5 3.500-1.500 0 1 1.500 1.500 3.500 1.500M2.500 9.500h4" fill="none" stroke="#333" strokeWidth="1.200" /></svg>
            </div>
          </div>
        </div>
        <div className="flex w-[15px] shrink-0 flex-col items-center border-l border-[#e4e4e4] bg-[#fafafa] py-[2px]">
          <Chevron dir="up" c="#999" />
          <div className="flex w-full flex-1 flex-col">
            <div className="flex-[120]" />
            <div className="flex-[697] rounded-full bg-[#c8c8c8]" />
            <div className="flex-[86]" />
          </div>
          <Chevron c="#888" />
        </div>
      </div>
      <StatusBar />
    </main>
  );
}

/* ---------- right panel dock ---------- */

const overlap = <><path d="M5.500 9.500h5v5h-5z" fill="#f0f0f0" stroke={G} strokeWidth="1.300" /><path d="M1.500 11.500h5v5h-5z" fill="#f0f0f0" stroke={G} strokeWidth="1.300" /></>;

const panelGroups: { n: string; el: React.ReactNode; on?: boolean }[][] = [
  [
    { n: "Pages", el: <><path d="M1 7l4-4h3.500v13H1zM10.500 3H14l4 4v9h-7.500z" /><path d="M9 1h1v17H9z" /><S d="M5 3v4H1M14 3v4h4" w={1} c="#f0f0f0" /></> },
    { n: "Layers", el: <><path d="M9.500 1L18 6.500L9.500 12L1 6.500z" /><path d="M1 10.500l2.200-1.400L9.500 13.200l6.300-4.100L18 10.500L9.500 17z" /></> },
    { n: "Links", el: <><rect x="1" y="5" width="10" height="7.500" rx="3.700" fill="none" stroke={G} strokeWidth="2" /><rect x="8" y="5" width="10" height="7.500" rx="3.700" fill="none" stroke={G} strokeWidth="2" /><S d="M6 8.700h7" w={1.200} /></> },
  ],
  [
    { n: "Stroke", el: <path d="M1 3h17v1.300H1zM1 7.500h17v2.200H1zM1 12.500h17v2.800H1z" /> },
    { n: "Swatches", on: true, el: <><path d="M1 3.500h17v12H1z" /><path d="M2.300 4.700h4.200v4H2.300z" fill="#777" /><path d="M7.500 4.700h4.200v4H7.500z" fill="#3a3a3a" /><path d="M12.700 4.700h4v4h-4zM2.300 10h4.200v4.200H2.300z" fill="#888" /><path d="M7.500 10h4.200v4.200H7.500zM12.700 10h4v4.200h-4z" fill="#999" /></> },
    { n: "Gradient", el: <rect x="1.500" y="4" width="16" height="11" fill="url(#gs)" stroke={G} strokeWidth="1.300" /> },
    { n: "CC Libraries", el: null },
  ],
  [
    { n: "Effects", el: <text x="9.500" y="14" fontSize="17" textAnchor="middle" fontStyle="italic" fontFamily="'Open Sans', sans-serif">fx</text> },
    { n: "Object Styles", el: <><S d="M5 2.500h13v13H5z" w={1.400} dash="3.500 1.500" />{overlap}</> },
  ],
  [{ n: "Paragraph Styles", el: <><path d="M10.500 1.500H18V3h-1v12h-1.500V3H14v12h-1.500V8.500h-2a3.500 3.500 0 0 1 0-7z" />{overlap}</> }],
  [{ n: "Character Styles", el: <>{overlap}<Sans x={13} y={12} s={15} bold>A</Sans></> }],
  [{ n: "Character", el: <><Sans x={8} y={15} s={17} bold>A</Sans><path d="M16 1h1.300v17H16z" /></> }],
  [{ n: "Paragraph", el: <path d="M7 2.500h7.500V4h-1v13H12V4h-2v13H8.500v-7H7a3.700 3.700 0 0 1 0-7.500z" /> }],
];

function PanelDock() {
  return (
    <aside aria-label="Panels" className="z-20 flex w-[166px] shrink-0 flex-col self-start border-x border-[#c9c9c9] bg-[#f0f0f0] shadow-[0_1px_3px_rgba(0,0,0,0.4)]">
      <button aria-label="Expand panels" className="flex h-[11px] items-center justify-end bg-[#dcdcdc] pr-[5px]">
        <Ico w={9} h={6}><S d="M3.500 .5L1 3L3.500 5.500M7.500 .5L5 3L7.500 5.500" w={1.200} /></Ico>
      </button>
      {panelGroups.map((g, gi) => (
        <section key={gi} className="border-t border-b border-t-[#c9c9c9] border-b-[#c9c9c9]">
          <div className="flex h-[11px] justify-center pt-1"><GripH /></div>
          {g.map((p) => (
            <div key={p.n} className="flex h-7 items-center">
              <button className={p.on ? "mx-1 flex h-6 flex-1 items-center gap-[7px] rounded-[3px] border border-[#a8a8a8] bg-[#bdbdbd] pl-[4px] text-[12px] font-bold text-[#4d4d4d]" : "mx-1 flex h-6 flex-1 items-center gap-[7px] border border-transparent pl-[4px] text-[12px] font-bold text-[#4d4d4d]"}>
                {p.el ? <Ico w={20} h={19}>{p.el}</Ico> : <CloudLogo s={20} c={G} />}
                {p.n}
              </button>
            </div>
          ))}
        </section>
      ))}
    </aside>
  );
}

/* ---------- floating swatches panel ---------- */

const swatches = [
  { n: "[None]", c: "none" },
  { n: "[Paper]", c: "#ffffff" },
  { n: "[Black]", c: "#231f20" },
  { n: "[Registration]", c: "#000000" },
  { n: "C=100 M=0 Y=0 K=0", c: "#00aeef" },
  { n: "C=0 M=0 Y=100 K=0", c: "#fff200" },
  { n: "PANTONE 2945 U", c: "#245a91" },
  { n: "PANTONE 7687 U", c: "#4d5b8c", on: true },
];

function SwatchesPanel() {
  return (
    <section aria-label="Swatches" className="absolute top-[223px] right-[167px] z-30 flex w-[241px] flex-col border border-[#bdbdbd] bg-[#f0f0f0] text-[11px] shadow-[0_2px_12px_rgba(0,0,0,0.35)]">
      <div className="h-[4px] bg-[#c8c8c8]" />
      <div className="flex h-[27px] border-b border-[#cfcfcf] bg-[#dcdcdc] text-[12px] font-semibold text-[#777]">
        <button className="w-8 overflow-hidden border-r border-[#c9c9c9] pl-3 text-left">Stroke</button>
        <button className="-mb-px flex w-20 items-center justify-center gap-1 bg-[#f0f0f0] text-[#4d4d4d]">
          <Ico w={7} h={10}><S d="M1 4L3.500 1L6 4zM1 6L3.500 9L6 6z" w={1} /></Ico>
          Swatches
        </button>
        <button className="w-8 overflow-hidden border-x border-[#c9c9c9] pl-[11px] text-left">Gradient</button>
        <button className="w-8 overflow-hidden border-r border-[#c9c9c9] pl-[10px] text-left">CC</button>
        <button aria-label="More tabs" className="ml-auto flex items-center"><Ico w={11} h={10}><S d="M1 1L5 5L1 9M6 1L10 5L6 9" w={1.500} c="#222" /></Ico></button>
        <div className="mx-[6px] my-2 w-px bg-[#888]" />
        <button aria-label="Panel menu" className="mr-[5px] flex items-center"><Ico w={11} h={8}><S d="M0 .5h11M0 3h11M0 5.500h11M0 7.800h11" w={.8} /></Ico></button>
      </div>
      <div className="flex h-[39px] items-center pt-px pl-[6px]">
        <FillStroke />
        <span className="-ml-[7px] self-start pt-[5px]"><Ico w={8} h={8}><S d="M1 2h3.500v5" w={1.100} /><path d="M0 2l2.500-2v4zM4.500 8L2.500 5.500h4z" /></Ico></span>
        <button aria-label="Formatting affects container" className="ml-[14px] h-2 w-2 border border-[#888] bg-[#e4e4e4]" />
        <button aria-label="Formatting affects text" className="ml-[6px] flex h-[21px] w-[21px] items-center justify-center rounded-[2px] border border-[#a3a3a3] bg-[#bdbdbd] font-['DejaVu_Serif',serif] text-[12px] font-bold text-[#333]">T</button>
        <label htmlFor="tint" className="ml-[35px] w-[27px] text-black">Tint:</label>
        <div className="flex h-[21px] w-[53px] rounded-[3px] border border-[#b8b8b8] bg-white">
          <input id="tint" defaultValue="100" className="w-full min-w-0 pl-[3px] leading-[19px] outline-none" />
          <button aria-label="Tint slider" className="flex w-[18px] shrink-0 items-center justify-center rounded-r-[3px] border-l border-[#b8b8b8] bg-[#f4f4f4]"><Chevron dir="right" /></button>
        </div>
        <span className="ml-px">%</span>
      </div>
      <ul className="mx-px h-[222px] border-y border-[#d4d4d4]">
        {swatches.map((s) => (
          <li key={s.n} className={s.on ? "flex h-[22px] items-center border-b border-[#d4d4d4] bg-[#b3d1ef] pl-[18px] font-bold" : "flex h-[22px] items-center border-b border-[#d4d4d4] pl-[18px]"}>
            <svg width="13" height="13" viewBox="0 0 13 13" className="mr-[7px]">
              <rect x=".5" y=".5" width="12" height="12" fill={s.c === "none" ? "#fff" : s.c} stroke="#666" />
              {s.c === "none" && <path d="M1 12L12 1" stroke="#e01010" strokeWidth="1.800" />}
            </svg>
            {s.n}
          </li>
        ))}
      </ul>
      <div className="flex h-6 items-center pr-[22px] pl-[5px]">
        <Ico w={18} h={14}><path d="M7.500 12.500h8a2.700 2.700 0 0 0 .8-5.200A4 4 0 0 0 12.500 3 4 4 0 0 0 8.500 3.300C6.800 3 5.500 4.500 5.500 6.200 4.300 7 4 8.300 4.500 9z" /><S d="M0 11h7" w={3.500} c="#f0f0f0" /><S d="M0 11h6.500M4 8.500L6.500 11L4 13.500" w={1.500} /></Ico>
        <div className="ml-auto flex items-center gap-[14px]">
          <button aria-label="Show swatches"><Ico w={15} h={12}><path d="M0 1h10v10H0z" /><S d="M1.500 4h7.500M1.500 7.500h7.500M3.500 2v8M7 2v8" w={.8} c="#f0f0f0" /><path d="M12 9.500h3l-1.500 1.500z" /></Ico></button>
          <button aria-label="New color group"><Ico w={13} h={12}><path d="M0 1h5l1 1.500h7V11H0z" /></Ico></button>
          <button aria-label="New swatch" className="ml-[3px]"><Ico w={11} h={12}><path d="M1 1h10v10H6V6H1z" /><path d="M1 7.500h3.500V11z" /></Ico></button>
          <button aria-label="Delete swatch" className="ml-[2px]"><Ico w={12} h={12}><S d="M0 2.500h12M4 2V.6h4V2M1.800 3v8.400h8.400V3M4.500 4.500v5.500M6 4.500v5.500M7.500 4.500v5.500" w={1} /></Ico></button>
        </div>
      </div>
      <div className="flex h-[7px] items-center justify-center border-t border-[#c9c9c9]"><GripH /></div>
    </section>
  );
}

/* ---------- desktop background ---------- */

const stars: number[][] = [
  [20, 40, 0.8], [30, 47, 0.6], [22, 52, 1.2], [39, 53, 1.1], [5, 66, 0.8], [38, 71, 0.9], [18, 108, 0.8], [23, 121, 1.2], [16, 127, 1.1], [41, 134, 1], [38, 218, 1.3], [41, 226, 1], [18, 214, 1], [11, 240, 1.3], [6, 252, 1], [26, 252, 0.9],
  [59, 833, 1.2], [33, 843, 1], [27, 843, 0.9], [61, 843, 1], [44, 856, 1], [11, 874, 1.3], [12, 880, 1], [40, 892, 1.8], [45, 893, 1], [46, 899, 0.9], [26, 921, 0.8], [53, 945, 1.1], [20, 958, 2.1], [52, 950, 0.9], [22, 970, 0.9], [13, 971, 0.8], [43, 971, 0.9], [54, 975, 2], [38, 1018, 1.7], [61, 1015, 1], [22, 1041, 0.9], [8, 1061, 0.9], [47, 1065, 1.3], [50, 1074, 1.4],
  [1880, 595, 1.2], [1912, 592, 1], [1905, 653, 1.2], [1904, 740, 0.9], [1915, 755, 1], [1909, 816, 1.5], [1911, 788, 0.8], [1903, 938, 0.9], [1908, 1025, 1.2], [1909, 1056, 1.4], [1767, 1076, 0.9], [1832, 1078, 0.9], [1912, 625, 0.8],
];

function Stars() {
  return (
    <svg className="absolute inset-0 h-full w-full" aria-hidden="true">
      {stars.map(([x, y, r], i) => (
        <circle key={i} cx={x} cy={y} r={r} fill="#b9d2e6" opacity={Math.min(1, r / 2)} />
      ))}
    </svg>
  );
}

const dates = [
  "Yesterday, 3:14 PM", "Jan 24, 2017, 10:33 AM", "Jan 24, 2017, 10:32 AM", "Jan 23, 2017, 7:39 AM", "Jan 23, 2017, 7:39 AM", "Feb 19, 2013, 10:17 AM", "Jul 16, 2012, 10:23 AM", "May 24, 2011, 12:20 PM", "Aug 23, 2017, 2:12 PM", "Feb 16, 2017, 11:52 AM", "Jan 13, 2017, 5:00 PM", "Dec 15, 2016, 12:26 PM", "Dec 4, 2015, 8:55 AM", "Nov 25, 2014, 2:43 PM", "Sep 26, 2013, 8:29 AM", "Jul 10, 2013, 12:09 PM", "Jun 28, 2013, 8:46 AM", "Jun 28, 2013, 8:32 AM", "Jun 27, 2013, 10:58 AM",
];

function FinderBack() {
  return (
    <>
      <section aria-label="Finder sidebar" className="absolute top-[560px] bottom-[9px] left-[64px] w-[200px] rounded-[5px] bg-[#dcdcdc] pt-[190px] pl-[9px] font-['Inter',sans-serif] text-[11px] font-semibold text-[#777]">
        <div className="flex h-[164px] flex-col justify-between pb-[8px] pl-[9px]">
          <Ico w={14} h={14}><circle cx="7" cy="11" r="7" /></Ico>
          <Ico w={14} h={14}><path d="M0 4l7-4 7 4v3H3v6H1z" /></Ico>
          <Ico w={14} h={14}><S d="M1 1h12v12H1z" /></Ico>
          <Ico w={14} h={14}><S d="M1 1h12v12H1zM1 5h12" /></Ico>
          <Ico w={14} h={14}><S d="M1 1h12v12H1zM1 4h12" w={2} /></Ico>
          <Ico w={14} h={14}><circle cx="7" cy="7" r="5.500" fill="none" stroke={G} /></Ico>
        </div>
        <h3 className="leading-[18px]">Devices</h3>
        <div className="flex h-9 items-center pl-[9px]"><Ico w={14} h={14}><S d="M1 1h12v12H1z" w={2} /></Ico></div>
        <h3 className="leading-[18px]">Shared</h3>
        <div className="flex h-[64px] flex-col justify-between pt-2 pl-[9px]">
          <Ico w={14} h={12}><S d="M1 1h12v10H1z" /></Ico>
          <Ico w={14} h={14}><circle cx="7" cy="7" r="7" /></Ico>
        </div>
      </section>
      <section aria-label="Finder window" className="absolute right-[50px] bottom-[12px] flex h-[620px] w-[300px] justify-end rounded-[5px] bg-[#f1f1f1]">
        <div className="mr-[3px] w-[8px] bg-[#b9b9b9]" />
      </section>
    </>
  );
}

function FinderFront() {
  return (
    <section aria-label="Finder" className="absolute right-[19px] bottom-[15px] flex h-[455px] w-[300px] flex-col overflow-hidden rounded-[5px] bg-white font-['Inter',sans-serif] text-[12px] shadow-[0_0_10px_rgba(0,0,0,0.4)]">
      <div className="flex h-[54px] shrink-0 items-center justify-end border-b border-[#b5b5b5] bg-[#f6f6f6] pt-[24px] pr-[7px] pb-[5px]">
        <label className="flex h-[24px] w-[200px] items-center gap-[6px] rounded-[4px] border border-[#d8d8d8] bg-[#f9f9f9] pl-[85px]">
          <svg width="13" height="13" viewBox="0 0 13 13" fill="none" stroke="#aaa" strokeWidth="1.200"><circle cx="5.500" cy="5.500" r="4.500" /><path d="M9 9l3.500 3.500" /></svg>
          <input type="search" aria-label="Search" placeholder="Search" className="w-20 text-[12px] outline-none placeholder:text-[#bdbdbd]" />
        </label>
      </div>
      <div className="flex min-h-0 flex-1">
        <div className="flex-1 overflow-hidden">
          <table className="w-full table-fixed border-collapse">
            <thead>
              <tr className="h-[25px] border-b border-[#c4c4c4] bg-[#f6f6f6]">
                <th className="overflow-hidden p-0 pl-[175px] text-left text-[12px] leading-4 font-medium whitespace-nowrap text-[#222]">Date Modified</th>
              </tr>
            </thead>
            <tbody>
              {dates.map((d, i) => (
                <tr key={i} className={i === 5 ? "h-[19px] bg-[#d8d8d8]" : i % 2 === 0 ? "h-[19px] bg-[#f3f3f3]" : "h-[19px] bg-white"}>
                  <td className="overflow-hidden p-0 pl-[175px] leading-4 whitespace-nowrap text-[#777]">{d}</td>
                </tr>
              ))}
            </tbody>
          </table>
        </div>
        <div className="flex w-[15px] flex-col items-center border-l border-[#e4e4e4] bg-[#fafafa] pt-[27px]">
          <div className="h-[247px] w-2 rounded-full bg-[#c0c0c0]" />
        </div>
      </div>
    </section>
  );
}

export default function App() {
  return (
    <div className="relative flex h-screen w-full flex-col overflow-hidden bg-[radial-gradient(ellipse_at_2%_86%,#22486d_0%,#1a3b58_12%,#0b1826_36%,transparent_50%),radial-gradient(circle_at_96%_52%,#11293c_0%,#060b12_14%,#04070d_30%)] font-['Open_Sans',sans-serif]">
      <Stars />
      <FinderBack />
      <FinderFront />
      <MenuBar />
      <div className="pointer-events-none absolute inset-x-0 top-[22px] bottom-0 flex">
        <MacDock />
      </div>
      <div className="relative ml-[45px] flex min-h-0 flex-1 flex-col">
        <div className="z-20 flex flex-col">
          <AppBar />
          <ControlBar />
        </div>
        <div className="flex min-h-0 flex-1">
          <ToolStrip />
          <DocumentWindow />
          <PanelDock />
        </div>
      </div>
      <SwatchesPanel />
    </div>
  );
}
